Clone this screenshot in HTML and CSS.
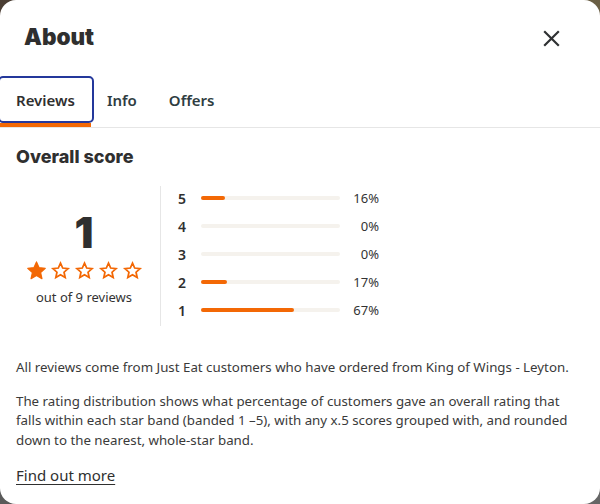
FILE: index.html
```html
<!DOCTYPE html>
<html lang="en">
<head>
<meta charset="utf-8">
<title>About</title>
<link rel="stylesheet" href="styles.css">
</head>
<body>
<div class="modal">
  <header class="header">
    <h1 class="title">About</h1>
    <button class="close" aria-label="Close">
      <svg width="17" height="17" viewBox="0 0 17 17"><path d="M1.2 1.2L15.8 15.8M15.8 1.2L1.2 15.8" stroke="#2f3133" stroke-width="2.2" fill="none"/></svg>
    </button>
  </header>
  <nav class="tabs">
    <div class="tab active">Reviews</div>
    <div class="tab">Info</div>
    <div class="tab">Offers</div>
  </nav>
  <main class="content">
    <h2 class="heading">Overall score</h2>
    <section class="score">
      <div class="summary">
        <div class="big">1</div>
        <div class="stars">
          <svg class="star" viewBox="0 0 24 24"><path d="M12 2.2l2.95 6.55 7.05.75-5.3 4.8 1.5 7.0L12 17.7l-6.2 3.6 1.5-7.0-5.3-4.8 7.05-.75z" fill="#f36805" stroke="#f36805" stroke-width="1.4" stroke-linejoin="round"/></svg>
          <svg class="star" viewBox="0 0 24 24"><path d="M12 3.6l2.5 5.6 6.1.65-4.55 4.1 1.3 6.0L12 16.9l-5.35 3.050 1.3-6.0-4.55-4.1 6.1-.65z" fill="none" stroke="#f36805" stroke-width="2" stroke-linejoin="miter"/></svg>
          <svg class="star" viewBox="0 0 24 24"><path d="M12 3.6l2.5 5.6 6.1.65-4.55 4.1 1.3 6.0L12 16.9l-5.35 3.05 1.3-6.0-4.55-4.1 6.1-.65z" fill="none" stroke="#f36805" stroke-width="2" stroke-linejoin="miter"/></svg>
          <svg class="star" viewBox="0 0 24 24"><path d="M12 3.6l2.5 5.6 6.1.65-4.55 4.1 1.3 6.0L12 16.9l-5.35 3.05 1.3-6.0-4.55-4.1 6.1-.65z" fill="none" stroke="#f36805" stroke-width="2" stroke-linejoin="miter"/></svg>
          <svg class="star" viewBox="0 0 24 24"><path d="M12 3.6l2.5 5.6 6.1.65-4.55 4.1 1.3 6.0L12 16.9l-5.35 3.05 1.3-6.0-4.55-4.1 6.1-.65z" fill="none" stroke="#f36805" stroke-width="2" stroke-linejoin="miter"/></svg>
        </div>
        <div class="count">out of 9 reviews</div>
      </div>
      <div class="bars">
        <div class="row"><span class="label">5</span><span class="track"><span class="fill" style="width:17%"></span></span><span class="pct">16%</span></div>
        <div class="row"><span class="label">4</span><span class="track"><span class="fill" style="width:0%"></span></span><span class="pct">0%</span></div>
        <div class="row"><span class="label">3</span><span class="track"><span class="fill" style="width:0%"></span></span><span class="pct">0%</span></div>
        <div class="row"><span class="label">2</span><span class="track"><span class="fill" style="width:19%"></span></span><span class="pct">17%</span></div>
        <div class="row"><span class="label">1</span><span class="track"><span class="fill" style="width:67%"></span></span><span class="pct">67%</span></div>
      </div>
    </section>
    <p class="text first">All reviews come from Just Eat customers who have ordered from King of Wings - Leyton.</p>
    <p class="text">The rating distribution shows what percentage of customers gave an overall rating that falls within each star band (banded 1 –5), with any x.5 scores grouped with, and rounded down to the nearest, whole-star band.</p>
    <a class="more" href="#">Find out more</a>
  </main>
</div>
</body>
</html>
```
FILE: styles.css
```css
html, body {
  margin: 0;
  padding: 0;
  height: 100%;
}
body {
  background:
    linear-gradient(to right, #4a3d33 0%, #6a5f45 100%) top / 100% 50% no-repeat,
    linear-gradient(to right, #5a5a5a 0%, #666 100%) bottom / 100% 50% no-repeat;
  font-family: "Noto Sans", "Open Sans", sans-serif;
  color: #333;
}
.modal {
  background: #fff;
  height: 504px;
  border-radius: 16px;
  overflow: hidden;
  box-sizing: border-box;
}
.header {
  display: flex;
  align-items: center;
  justify-content: space-between;
  height: 76px;
  padding: 0 40px 0 24px;
  box-sizing: border-box;
}
.title {
  margin: 0 0 4px;
  font-family: "Inter", "Lato", sans-serif;
  font-weight: 900;
  font-size: 22.5px;
  color: #2f2f2f;
  letter-spacing: 0;
}
.close {
  border: 0;
  background: none;
  padding: 0;
  width: 17px;
  height: 17px;
  display: flex;
}
.tabs {
  display: flex;
  height: 52px;
  border-bottom: 1px solid #e6e6e6;
  box-sizing: border-box;
}
.tab {
  position: relative;
  display: flex;
  align-items: center;
  padding: 0 16px 4px;
  font-size: 15px;
  font-weight: 600;
  color: #2f3d42;
}
.tab.active {
  color: #2f2f2f;
  border-bottom: 4px solid #f36805;
  padding-bottom: 0;
}
.tab.active::after {
  content: "";
  position: absolute;
  left: -2px;
  right: -3px;
  top: 0;
  bottom: 0;
  border: 2px solid #24389b;
  border-radius: 5px;
}
.content {
  padding: 0 16px;
}
.heading {
  margin: 18px 0 0;
  font-family: "Inter", "Lato", sans-serif;
  font-weight: 800;
  font-size: 18px;
  line-height: 22px;
  color: #2f2f2f;
}
.score {
  display: flex;
  margin-top: 18px;
  height: 140px;
}
.summary {
  width: 136px;
  display: flex;
  flex-direction: column;
  align-items: center;
  justify-content: center;
  border-right: 1px solid #e6e6e6;
  padding-right: 8px;
  padding-top: 6px;
}
.big {
  font-family: "Inter", "Lato", sans-serif;
  font-weight: 900;
  font-size: 42px;
  line-height: 42px;
  color: #2f2f2f;
}
.stars {
  display: flex;
  gap: 3px;
  margin-top: 6px;
}
.star {
  width: 21px;
  height: 21px;
}
.count {
  font-size: 13px;
  line-height: 18px;
  margin-top: 7px;
  color: #333;
}
.bars {
  padding-left: 17px;
  display: flex;
  flex-direction: column;
  margin-top: -2px;
}
.row {
  display: grid;
  grid-template-columns: 23px 139px 39px;
  align-items: center;
  height: 28px;
}
.label {
  font-size: 14px;
  font-weight: 600;
  color: #2f2f2f;
}
.track {
  display: block;
  height: 4px;
  border-radius: 2px;
  background: #f5f2ed;
}
.fill {
  display: block;
  height: 4px;
  border-radius: 2px;
  background: #f36805;
}
.pct {
  text-align: right;
  font-size: 13px;
  color: #333;
}
.text {
  font-size: 13.3px;
  line-height: 19.5px;
  margin: 0 0 14px;
  color: #3a3a3a;
}
.text.first {
  margin-top: 32px;
}
.more {
  display: inline-block;
  font-size: 15px;
  color: #2f2f2f;
  text-decoration: underline;
  text-underline-offset: 3px;
  margin-top: 1px;
}
```
